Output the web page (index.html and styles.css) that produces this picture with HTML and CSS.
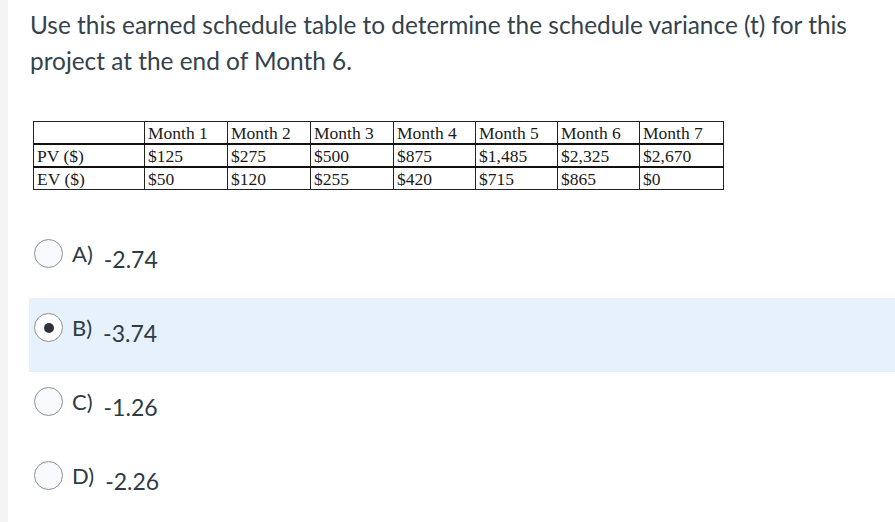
FILE: index.html
```html
<!DOCTYPE html>
<html>
<head>
<meta charset="utf-8">
<link rel="stylesheet" href="styles.css">
</head>
<body>
<div class="page">
  <div class="strip"></div>
  <main class="content">
    <p class="question">Use this earned schedule table to determine the schedule variance (t) for this project at the end of Month 6.</p>
    <table class="es">
      <colgroup>
        <col style="width:111px"><col style="width:83px"><col style="width:83px"><col style="width:83px"><col style="width:82px"><col style="width:82px"><col style="width:82px"><col style="width:84px">
      </colgroup>
      <tr class="head"><td></td><td>Month 1</td><td>Month 2</td><td>Month 3</td><td>Month 4</td><td>Month 5</td><td>Month 6</td><td>Month 7</td></tr>
      <tr><td>PV ($)</td><td>$125</td><td>$275</td><td>$500</td><td>$875</td><td>$1,485</td><td>$2,325</td><td>$2,670</td></tr>
      <tr><td>EV ($)</td><td>$50</td><td>$120</td><td>$255</td><td>$420</td><td>$715</td><td>$865</td><td>$0</td></tr>
    </table>
    <div class="options">
      <div class="opt"><span class="radio"></span><span class="letter">A)</span><span class="val">-2.74</span></div>
      <div class="opt selected"><span class="radio checked"></span><span class="letter">B)</span><span class="val">-3.74</span></div>
      <div class="opt"><span class="radio"></span><span class="letter">C)</span><span class="val">-1.26</span></div>
      <div class="opt"><span class="radio"></span><span class="letter">D)</span><span class="val">-2.26</span></div>
    </div>
  </main>
</div>
</body>
</html>
```

FILE: styles.css
```css
html, body {
  margin: 0;
  padding: 0;
  background: #ffffff;
}
.page {
  display: flex;
  min-height: 522px;
  font-family: Lato, "Noto Sans", sans-serif;
  color: #2d3b45;
}
.strip {
  width: 8px;
  flex: 0 0 8px;
  background: #f4f4f4;
}
.content {
  flex: 1;
  min-width: 0;
}
.question {
  margin: 7px 0 0 22px;
  font-size: 24.4px;
  line-height: 36px;
  width: 850px;
  color: #34424c;
}
.es {
  margin: 42px 0 0 25px;
  border-collapse: collapse;
  table-layout: fixed;
  width: 690px;
  font-family: "Liberation Serif", serif;
  font-size: 17.5px;
  color: #1a1a1a;
}
.es td {
  border: 1px solid #222;
  height: 21px;
  padding: 0 0 0 3px;
  line-height: 20px;
  white-space: nowrap;
}
.es tr + tr td {
  border-top: 2px solid #111;
}
.options {
  margin: 34px 0 0 21px;
}
.opt {
  display: flex;
  align-items: flex-start;
  height: 74px;
  padding-left: 5px;
}
.opt.selected {
  background: #e7f1fb;
}
.radio {
  width: 27px;
  height: 27px;
  margin-top: 15px;
  border: 1px solid #8b9096;
  border-radius: 50%;
  background: #f7f9fc;
  display: flex;
  align-items: center;
  justify-content: center;
  flex: 0 0 auto;
}
.radio.checked {
  background: #ffffff;
}
.radio.checked::after {
  content: "";
  width: 10px;
  height: 10px;
  border-radius: 50%;
  background: #2f3338;
}
.letter {
  margin: 19px 0 0 9px;
  font-size: 22px;
  line-height: 22px;
}
.val {
  margin: 24px 0 0 11px;
  font-size: 23px;
  line-height: 22px;
}
```
